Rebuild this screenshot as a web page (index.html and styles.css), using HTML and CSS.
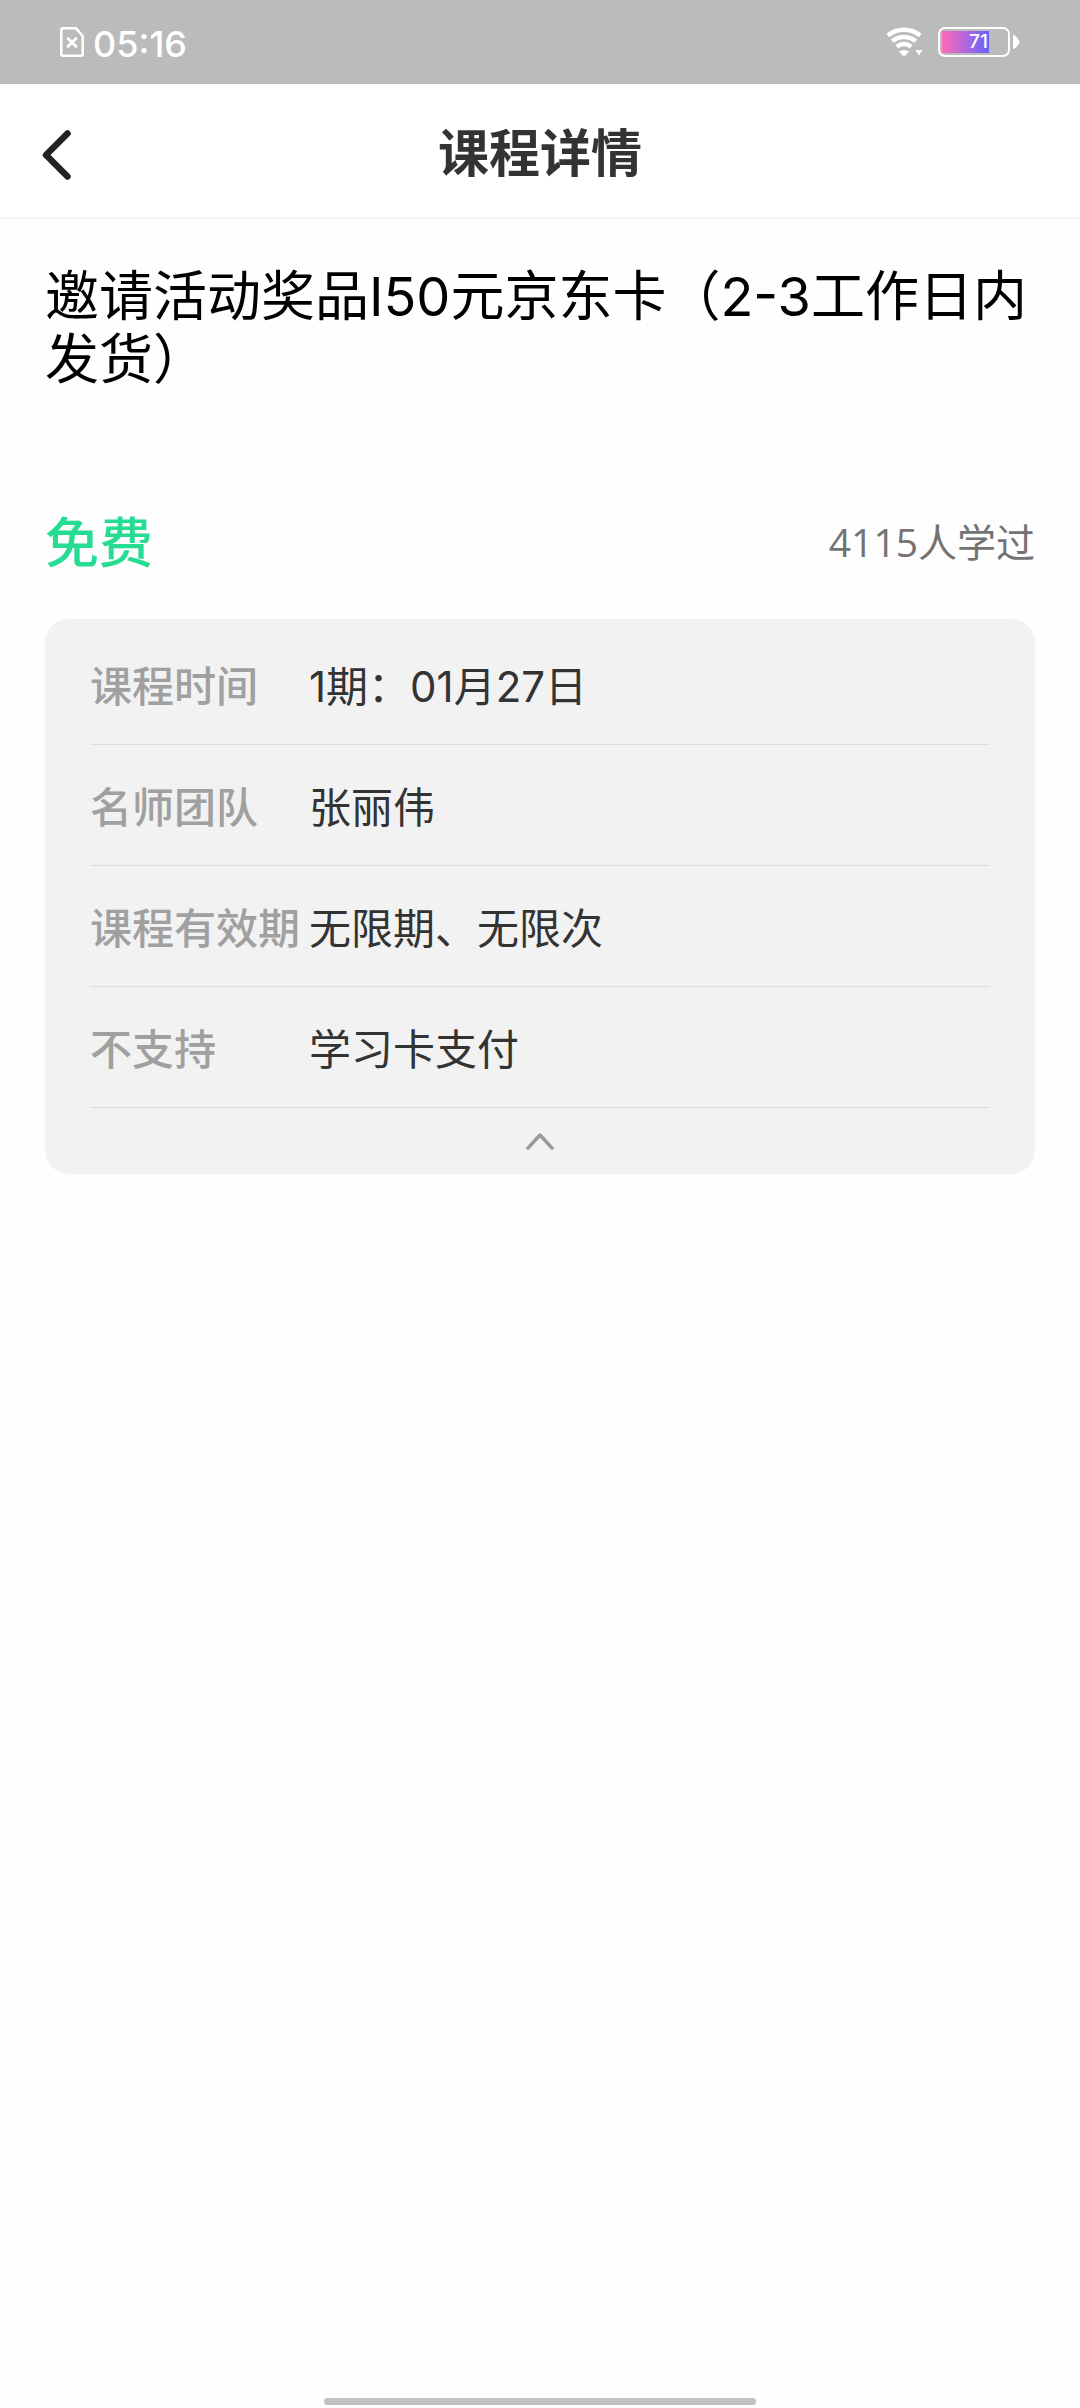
FILE: index.html
```html
<!DOCTYPE html>
<html lang="zh-CN">
<head>
    <meta charset="UTF-8">
    <meta name="viewport" content="width=device-width, initial-scale=1.0">
    <title>课程详情</title>
    <link rel="stylesheet" href="styles.css">
</head>
<body>
    <div class="status-bar">
        <div class="status-left">
            <svg class="sim-icon" width="24" height="30" viewBox="0 0 24 30" fill="none" stroke="#fff" stroke-linejoin="round" stroke-linecap="round">
                <path d="M3 1.3h13l6.7 7.7v18q0 1.7-1.7 1.7H3q-1.7 0-1.7-1.7V3Q1.3 1.3 3 1.3z" stroke-width="2.6"/>
                <path d="M8 11.5l8 8M16 11.5l-8 8" stroke-width="2.8"/>
            </svg>
            <span class="time">05:16</span>
        </div>
        <div class="status-right">
            <svg width="38" height="30" viewBox="0 0 38 30" fill="none">
                <path d="M1.7 8.5Q9 2.8 18 2.8t16.3 5.7" stroke="#fff" stroke-width="4.6"/>
                <path d="M6.3 14.2Q11.5 10 18 10t11.7 4.2" stroke="#fff" stroke-width="4.6"/>
                <path d="M10.8 19.8Q14 17 18 17t7.2 2.8" stroke="#fff" stroke-width="4.4"/>
                <path d="M12.8 24.8Q18 21 23.2 24.8L18 29.5z" fill="#fff"/>
                <path d="M29.5 23h7l-3.5 5.5z" fill="#fff"/>
            </svg>
            <div class="battery">
                <div class="battery-body">
                    <div class="battery-level" style="width: 71%">71</div>
                </div>
                <svg width="7" height="14" viewBox="0 0 7 14">
                    <path d="M0 0Q2 0 3.5 2L6 5.5Q7 7 6 8.5L3.5 12Q2 14 0 14z" fill="#fff"/>
                </svg>
            </div>
        </div>
    </div>

    <header class="navbar">
        <button class="back" type="button" aria-label="返回">
            <svg width="30" height="52" viewBox="0 0 30 52" fill="none" stroke="#222" stroke-width="6.5" stroke-linecap="round" stroke-linejoin="round">
                <path d="M25.5 4.5L4 26l21.5 21.5"/>
            </svg>
        </button>
        <h1>课程详情</h1>
    </header>

    <main class="container">
        <h2 class="course-title">邀请活动奖品I50元京东卡（2-3工作日内发货）</h2>
        <div class="price-row">
            <span class="price">免费</span>
            <span class="learned">4115人学过</span>
        </div>
        <section class="info-card">
            <dl>
                <div class="info-row">
                    <dt>课程时间</dt>
                    <dd>1期：01月27日</dd>
                </div>
                <div class="info-row">
                    <dt>名师团队</dt>
                    <dd>张丽伟</dd>
                </div>
                <div class="info-row">
                    <dt>课程有效期</dt>
                    <dd>无限期、无限次</dd>
                </div>
                <div class="info-row">
                    <dt>不支持</dt>
                    <dd>学习卡支付</dd>
                </div>
            </dl>
            <button class="collapse" type="button" aria-label="收起">
                <svg width="28" height="18" viewBox="0 0 28 18" fill="none" stroke="#999" stroke-width="3.5" stroke-linecap="round" stroke-linejoin="round">
                    <path d="M2 16L14 3l12 13"/>
                </svg>
            </button>
        </section>
    </main>

    <div class="home-indicator"></div>
</body>
</html>
```

FILE: styles.css
```css
* {
    box-sizing: border-box;
}

body {
    font-family: Inter, "Noto Sans CJK SC", sans-serif;
    background-color: #fefefe;
    color: #333333;
    margin: 0;
    min-height: 100vh;
    display: flex;
    flex-direction: column;
}

button {
    background: none;
    border: none;
    padding: 0;
    cursor: pointer;
}

svg {
    display: block;
}

/* status bar */
.status-bar {
    background-color: #bbbbbb;
    color: #ffffff;
    height: 84px;
    padding: 0 60px;
    display: flex;
    justify-content: space-between;
    align-items: center;
}

.status-left,
.status-right {
    display: flex;
    align-items: center;
}

.status-left {
    gap: 9px;
}

.status-right {
    gap: 14px;
}

.time {
    font-size: 36px;
    font-weight: 500;
    line-height: 48px;
    padding-top: 4px;
}

.battery {
    display: flex;
    align-items: center;
    gap: 3px;
}

.battery-body {
    width: 72px;
    height: 30px;
    border: 2px solid #ffffff;
    border-radius: 7px;
    padding: 2px 0 2px 2px;
}

.battery-level {
    height: 100%;
    background: linear-gradient(to right, #ff69b8, #6464ff);
    font-size: 19px;
    font-weight: 500;
    line-height: 22px;
    text-align: right;
    padding-right: 1px;
}

/* title bar */
.navbar {
    background-color: #ffffff;
    border-bottom: 2px solid #f2f2f2;
    height: 135px;
    padding: 0 42px;
    display: grid;
    grid-template-columns: 60px 1fr 60px;
    align-items: center;
}

.back {
    height: 96px;
    padding-top: 8px;
}

.navbar h1 {
    margin: 0;
    padding-top: 6px;
    font-size: 51px;
    font-weight: bold;
    line-height: 72px;
    text-align: center;
}

/* course */
.container {
    padding: 46px 45px 45px;
}

.course-title {
    margin: 0 0 121px;
    color: #000000;
    font-size: 54px;
    font-weight: normal;
    line-height: 63px;
}

.price-row {
    display: flex;
    justify-content: space-between;
    align-items: center;
    line-height: 63px;
    height: 63px;
    margin-bottom: 44px;
}

.price {
    color: #26dc92;
    font-size: 54px;
    font-weight: 500;
}

.learned {
    color: #737373;
    font-family: "Open Sans", "Noto Sans CJK SC", sans-serif;
    font-size: 39px;
    padding-bottom: 4px;
}

.info-card {
    background-color: #f2f2f2;
    border-radius: 24px;
    padding: 5px 45px 0;
}

.info-card dl {
    margin: 0;
}

.info-row {
    display: flex;
    align-items: center;
    height: 121px;
    padding-top: 5px;
    border-bottom: 1px solid #dddddd;
    font-size: 42px;
    line-height: 60px;
}

.info-row dt {
    width: 219px;
    color: #a0a0a0;
    font-weight: 500;
}

.info-row dd {
    margin: 0;
}

.collapse {
    width: 100%;
    height: 66px;
    display: flex;
    justify-content: center;
    align-items: center;
}

.home-indicator {
    width: 40%;
    height: 7px;
    margin: auto auto 3px;
    border-radius: 4px;
    background-color: #c2c2c2;
}
```
